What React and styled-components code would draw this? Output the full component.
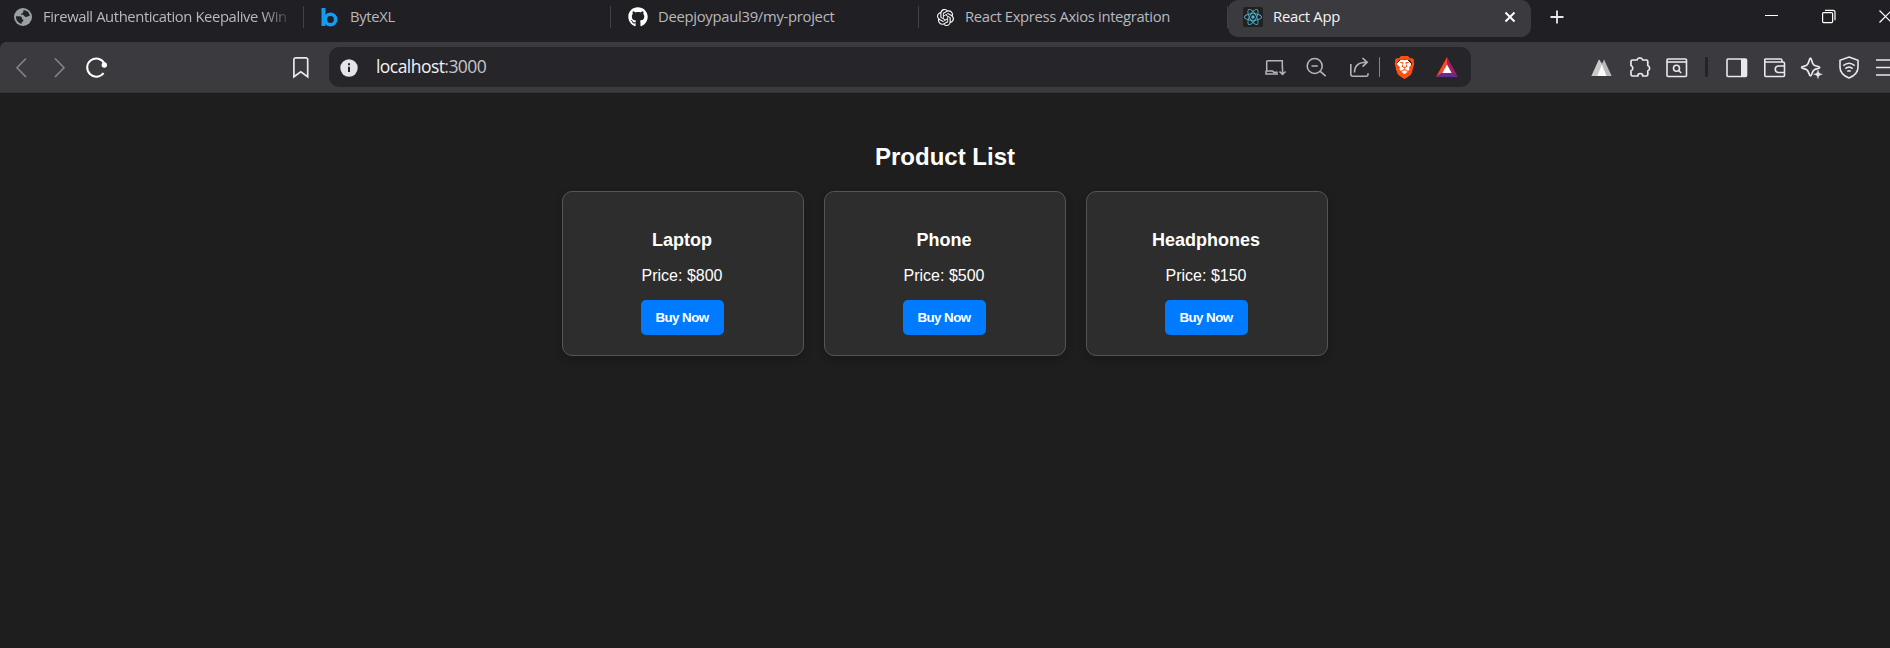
import React from "react";
import styled, { createGlobalStyle } from "styled-components";
import { FaGithub } from "react-icons/fa";
import { SiOpenai, SiReact, SiBrave } from "react-icons/si";

const GlobalStyle = createGlobalStyle`
  * { box-sizing: border-box; }
  body { margin: 0; background: #1e1e1e; overflow: hidden; }
`;

const ui = `"Open Sans", "Noto Sans", sans-serif`;

const Window = styled.div`
  width: 1890px;
  height: 648px;
  overflow: hidden;
  background: #1e1e1e;
  display: flex;
  flex-direction: column;
`;

const TabStrip = styled.div`
  height: 42px;
  flex: none;
  background: #201f24;
  display: flex;
  align-items: flex-start;
  font-family: ${ui};
`;

const Tab = styled.div`
  width: ${(p) => p.$width}px;
  height: 34px;
  flex: none;
  display: flex;
  align-items: center;
  padding-left: ${(p) => p.$pad}px;
  border-right: ${(p) => (p.$last ? "0" : "1px")} solid transparent;
  border-image: linear-gradient(transparent 7px, #424147 7px, #424147 27px, transparent 27px) 1;
  border-image-width: 0 1px 0 0;
`;

const ActiveTab = styled.div`
  width: 303px;
  height: 37px;
  flex: none;
  padding: 0 13px 3px 15px;
  display: flex;
  align-items: center;
  background: #3b3a3f;
  border-radius: 10px;
`;

const Favicon = styled.span`
  width: 20px;
  height: 20px;
  flex: none;
  display: flex;
  align-items: center;
  justify-content: center;
  border-radius: 2px;
  background: ${(p) => p.$bg || "transparent"};
  color: ${(p) => p.$color || "#fff"};
  svg { display: block; }
`;

const TabTitle = styled.span`
  margin: -2px 0 0 10px;
  flex: ${(p) => (p.$fade ? "none" : "1")};
  width: ${(p) => (p.$fade ? "249px" : "auto")};
  white-space: nowrap;
  font-size: 14.8px;
  line-height: 24px;
  letter-spacing: ${(p) => p.$spacing}px;
  color: ${(p) => (p.$active ? "#f4f4f5" : "#b9b8bb")};
  mask-image: ${(p) => (p.$fade ? "linear-gradient(90deg, #000 220px, transparent 251px)" : "none")};
`;

const Glyph = styled.svg`
  display: block;
  flex: none;
  width: ${(p) => p.$w || 24}px;
  height: ${(p) => p.$h || 24}px;
  margin-left: ${(p) => p.$ml || 0}px;
  margin-top: ${(p) => p.$mt || 0}px;
  fill: none;
  stroke: ${(p) => p.$color || "#e9e8ec"};
  stroke-width: ${(p) => p.$sw ?? 1.6};
`;

const WindowControls = styled.div`
  margin-left: 200px;
  padding-top: 9px;
  display: flex;
  gap: 42px;
`;

const Toolbar = styled.div`
  height: 51px;
  flex: none;
  display: flex;
  align-items: flex-start;
  padding: 5px 0 0 9px;
  background: #3b3a3f;
  border-bottom: 1px solid #343338;
  border-top-left-radius: 6px;
`;

const IconRow = styled.div`
  display: flex;
  margin-left: ${(p) => p.$ml || 0}px;
  padding-top: 9px;
`;

const AddressBar = styled.div`
  width: 1142px;
  height: 40px;
  flex: none;
  margin-left: 16px;
  padding: 9px 12px 0 8px;
  display: flex;
  border-radius: 10px;
  background: #26252a;
`;

const Url = styled.span`
  flex: 1;
  margin-left: 15px;
  margin-top: -2px;
  font-family: ${ui};
  font-size: 17.5px;
  line-height: 24px;
  letter-spacing: -0.55px;
  color: #f2f2f4;
  em { font-style: normal; color: #c6c5c9; }
`;

const Divider = styled.i`
  width: ${(p) => p.$w}px;
  height: 20px;
  margin: 1px 0 0 ${(p) => p.$ml}px;
  border-radius: 1px;
  background: ${(p) => p.$color};
`;

const BraveMark = styled.span`
  width: 24px;
  height: 24px;
  margin-left: 12px;
  display: flex;
  justify-content: center;
  color: #ff4f0d;
  background: radial-gradient(ellipse 8px 8px at 50% 48%, #fff 98%, transparent);
`;

const Page = styled.main`
  flex: 1;
  padding-top: 50px;
  font-family: Arial, "Liberation Sans", sans-serif;
  text-align: center;
  color: #fff;
`;

const Heading = styled.h2`
  margin: 0 0 20px;
  font-size: 24px;
  line-height: 28px;
`;

const CardRow = styled.div`
  display: flex;
  justify-content: center;
  gap: 20px;
`;

const Card = styled.article`
  width: 242px;
  height: 165px;
  padding: 38px 21px 20px 19px;
  display: flex;
  flex-direction: column;
  align-items: center;
  background: #2d2d2d;
  border: 1px solid #555;
  border-radius: 10px;
  box-shadow: 0 4px 8px rgba(0, 0, 0, 0.2);
`;

const ProductName = styled.h3`
  margin: 0 0 17px;
  font-size: 18px;
  line-height: 20px;
`;

const Price = styled.p`
  margin: 0 0 15px;
  font-size: 16px;
  line-height: 18px;
`;

const BuyButton = styled.button`
  width: 83px;
  height: 35px;
  padding: 0;
  border: 0;
  border-radius: 5px;
  background: #007bff;
  color: #fff;
  font: bold 13.33px Arial, "Liberation Sans", sans-serif;
  letter-spacing: -0.55px;
`;

const products = [
  { name: "Laptop", price: 800 },
  { name: "Phone", price: 500 },
  { name: "Headphones", price: 150 },
];

const GlobeIcon = () => (
  <svg width="18" height="18" viewBox="0 0 18 18">
    <circle cx="9" cy="9" r="9" fill="#9ba0a5" />
    <path d="M2 8.2c2 .2 4-.2 5.2.6 1.300.9.3 2.200 1.600 2.600 1.400.4.6 1.800-.4 2.300-.8.5-.7 1.600-1 2.300A7.200 7.200 0 0 1 2 8.200zM9.600 2c-.5 1.300.2 2-1 2.900-.9.7-1.800.8-1.500 1.700.4 1 2 .3 2.800.8.900.6 1 1.700 2.300 1.600 1.200-.1 1.700-1.200 3.700-.8A7.200 7.200 0 0 0 9.600 2z" fill="#242329" />
  </svg>
);

const ByteIcon = () => (
  <svg width="18" height="19" viewBox="0 0 18 19" fill="none" stroke="#159bef">
    <path d="M2.500 0v18" strokeWidth="4" />
    <circle cx="9.500" cy="11.500" r="5.200" strokeWidth="3.600" />
  </svg>
);

const SideTab = ({ width, pad, icon, title, spacing, color, fade, last }) => (
  <Tab $width={width} $pad={pad} $last={last}>
    <Favicon $color={color}>{icon}</Favicon>
    <TabTitle $spacing={spacing} $fade={fade}>{title}</TabTitle>
  </Tab>
);

function Tabs() {
  return (
    <TabStrip>
      <SideTab width={304} pad={13} icon={<GlobeIcon />} title="Firewall Authentication Keepalive Win" spacing={-0.4} fade />
      <SideTab width={307} pad={16} icon={<ByteIcon />} title="ByteXL" spacing={-0.3} />
      <SideTab width={308} pad={17} icon={<FaGithub size={20} />} title="Deepjoypaul39/my-project" spacing={-0.28} />
      <SideTab width={309} pad={16} icon={<SiOpenai size={17} />} title="React Express Axios integration" spacing={-0.34} last />
      <ActiveTab>
        <Favicon $bg="#212121" $color="#4fb6d3"><SiReact size={18} /></Favicon>
        <TabTitle $spacing={-0.25} $active>React App</TabTitle>
        <Glyph $w={16} $h={16} $sw={2} $color="#fff" viewBox="0 0 16 16"><path d="M3.500 3.500l9 9M12.500 3.500l-9 9" /></Glyph>
      </ActiveTab>
      <Glyph $w={16} $h={16} $ml={18} $mt={9} $sw={1.800} viewBox="0 0 16 16"><path d="M8 1.500v13M1.500 8h13" /></Glyph>
      <WindowControls>
        <Glyph $w={15} $h={15} $sw={1} $color="#fff" viewBox="0 0 15 15"><path d="M0 6.500h13" /></Glyph>
        <Glyph $w={15} $h={15} $sw={1.200} $color="#fff" viewBox="0 0 15 15">
          <rect x="0.600" y="3.600" width="10" height="10" rx="1" />
          <path d="M3 1.300h8a2 2 0 0 1 2 2v8" />
        </Glyph>
        <Glyph $w={15} $h={15} $sw={1.200} $color="#fff" viewBox="0 0 15 15"><path d="M.5 1.500l12 12M12.500 1.500l-12 12" /></Glyph>
      </WindowControls>
    </TabStrip>
  );
}

function Navigation() {
  return (
    <Toolbar>
      <IconRow>
        <Glyph $color="#858489" viewBox="0 0 24 24"><path d="M17 2.500L8 11.800l9 9.200" /></Glyph>
        <Glyph $ml={14} $color="#858489" viewBox="0 0 24 24"><path d="M8 2.500l9 9.300L8 21" /></Glyph>
        <Glyph $ml={14} $sw={2} $color="#fff" viewBox="0 0 24 24">
          <path d="M19.300 7.200A9.100 9.100 0 1 0 18.600 17" />
          <circle cx="19.300" cy="9" r="2.700" fill="#fff" stroke="none" />
        </Glyph>
        <Glyph $ml={180} $sw={1.700} viewBox="0 0 24 24"><path d="M6.500 1.900h10.500a1.700 1.700 0 0 1 1.700 1.700v17.200l-6.900-5-6.900 5V3.600a1.700 1.700 0 0 1 1.700-1.700z" /></Glyph>
      </IconRow>
      <AddressBar>
        <Glyph viewBox="0 0 24 24">
          <circle cx="12" cy="12" r="8.700" fill="#e5e4e9" stroke="none" />
          <path d="M12 10.700v5.300M12 7.300v2" stroke="#26252a" strokeWidth="2" />
        </Glyph>
        <Url>localhost<em>:3000</em></Url>
        <Glyph $color="#b5b4b9" $sw={1.500} viewBox="0 0 24 24">
          <path d="M3.700 15V5.700a1 1 0 0 1 1-1h14.600v7.300M2.700 15h7l1 1.200h4M3 15v3h12M19.500 11v7.500M16.500 15.500l3 3 3-3" />
        </Glyph>
        <Glyph $ml={18} $color="#b5b4b9" viewBox="0 0 24 24">
          <circle cx="9.700" cy="10" r="7.500" /><path d="M15 15.200l5.700 5M6.500 10h6.300" />
        </Glyph>
        <Glyph $ml={19} $color="#b5b4b9" viewBox="0 0 24 24">
          <path d="M2.800 8v10.500a1.800 1.800 0 0 0 1.800 1.800h13.600a1.800 1.800 0 0 0 1.800-1.800v-1.300M6.500 16.500c0-6.500 4-10.300 12-10.300M14.500 2l4.700 4.300-4.700 4.400" />
        </Glyph>
        <Divider $w={1} $ml={7} $color="#85848a" />
        <BraveMark><SiBrave size={23} /></BraveMark>
        <Glyph $ml={19} viewBox="0 0 24 24" $sw={0}>
          <path d="M12 1L1 21l6.500-4.300L12 9z" fill="#ff4724" />
          <path d="M12 1l11 20-6.500-4.300L12 9z" fill="#9e1f63" />
          <path d="M1 21h22l-6.500-4.300h-9z" fill="#662d91" />
          <path d="M12 8.500l4.700 8.500H7.300z" fill="#fff" />
        </Glyph>
      </AddressBar>
      <IconRow $ml={119}>
        <Glyph $sw={0} viewBox="0 0 24 24">
          <path d="M1.500 20L9 3.500l3 4.500 2-4.500L21.700 20z" fill="#b8b8ba" />
          <path d="M7 20l4.700-12L16.500 20z" fill="#fafafa" />
          <path d="M9 3.500l3 4.500-5 12H1.500z" fill="#c9c9ca" />
        </Glyph>
        <Glyph $ml={14} $sw={1.700} viewBox="0 0 24 24">
          <path d="M4.500 4H9a3 3 0 0 1 5.700 0h3.600a1.500 1.500 0 0 1 1.500 1.500v4a3 3 0 0 1 0 5.500v3.500a1.500 1.500 0 0 1-1.500 1.500h-3.500a2.500 2.500 0 0 0-5 0H4.500A1.500 1.500 0 0 1 3 18.500V15a3 3 0 0 0 0-5.500v-4A1.500 1.500 0 0 1 4.500 4z" />
        </Glyph>
        <Glyph $ml={13} $sw={1.600} viewBox="0 0 24 24">
          <rect x="2" y="3" width="19.500" height="17.500" rx="1" /><path d="M2 6h19.500" />
          <circle cx="11.500" cy="12.300" r="3" /><path d="M13.700 14.500l2.500 2.500" />
        </Glyph>
        <Divider $w={3} $ml={16} $color="#242328" />
        <Glyph $ml={17} $sw={1.600} viewBox="0 0 24 24">
          <rect x="2" y="3" width="19.500" height="17.500" rx="1" /><path d="M16 3h5.500v17.500H16z" fill="#e9e8ec" stroke="none" />
        </Glyph>
        <Glyph $ml={14} $sw={1.600} viewBox="0 0 24 24">
          <path d="M19 6V4.500A1.500 1.500 0 0 0 17.500 3h-15A.7.7 0 0 0 1.800 4v15.500a1 1 0 0 0 1 1h17.700a1 1 0 0 0 1-1V7.500a1.500 1.500 0 0 0-1.500-1.500H2M21 10h-6a3.300 3.300 0 0 0 0 6.500h6" />
        </Glyph>
        <Glyph $ml={13} $sw={1.700} viewBox="0 0 24 24">
          <path d="M10.500 2c1.300 0 1.300 6.300 3.700 7.300 2.400 1.200 5.500 1 5.500 2.200 0 1.100-3 1-5.300 2.200-2.500 1.300-2.500 6.300-3.900 6.300S9 15 6.700 13.700C4.500 12.500 1.500 12.500 1.500 11.500s3-1 5.200-2.200C9.100 8 9.100 2 10.500 2z" />
          <path d="M18 14c.5 3 1.200 3.500 4.300 4.300-3.100.8-3.800 1.300-4.300 4.200-.5-2.900-1.200-3.400-4.300-4.200 3.100-.8 3.800-1.300 4.300-4.300z" fill="#e9e8ec" strokeWidth="0.500" />
        </Glyph>
        <Glyph $ml={13} $sw={1.600} viewBox="0 0 24 24">
          <path d="M12 1l9 3.200v7c0 5-4.200 8.800-9 10.800-4.800-2-9-5.800-9-10.800v-7z" />
          <path d="M6.300 9.700c3.500-3 7.900-3 11.400 0M8.300 12.700c2.400-2 5-2 7.400 0M10.300 15.500c1-.9 2.400-.9 3.400 0" />
        </Glyph>
        <Glyph $w={14} $ml={15} $sw={1.700} viewBox="0 0 14 24"><path d="M0 4h14M0 11.500h14M0 19h14" /></Glyph>
      </IconRow>
    </Toolbar>
  );
}

export default function App() {
  return (
    <Window>
      <GlobalStyle />
      <Tabs />
      <Navigation />
      <Page>
        <Heading>Product List</Heading>
        <CardRow>
          {products.map(({ name, price }) => (
            <Card key={name}>
              <ProductName>{name}</ProductName>
              <Price>{`Price: $${price}`}</Price>
              <BuyButton>Buy Now</BuyButton>
            </Card>
          ))}
        </CardRow>
      </Page>
    </Window>
  );
}
